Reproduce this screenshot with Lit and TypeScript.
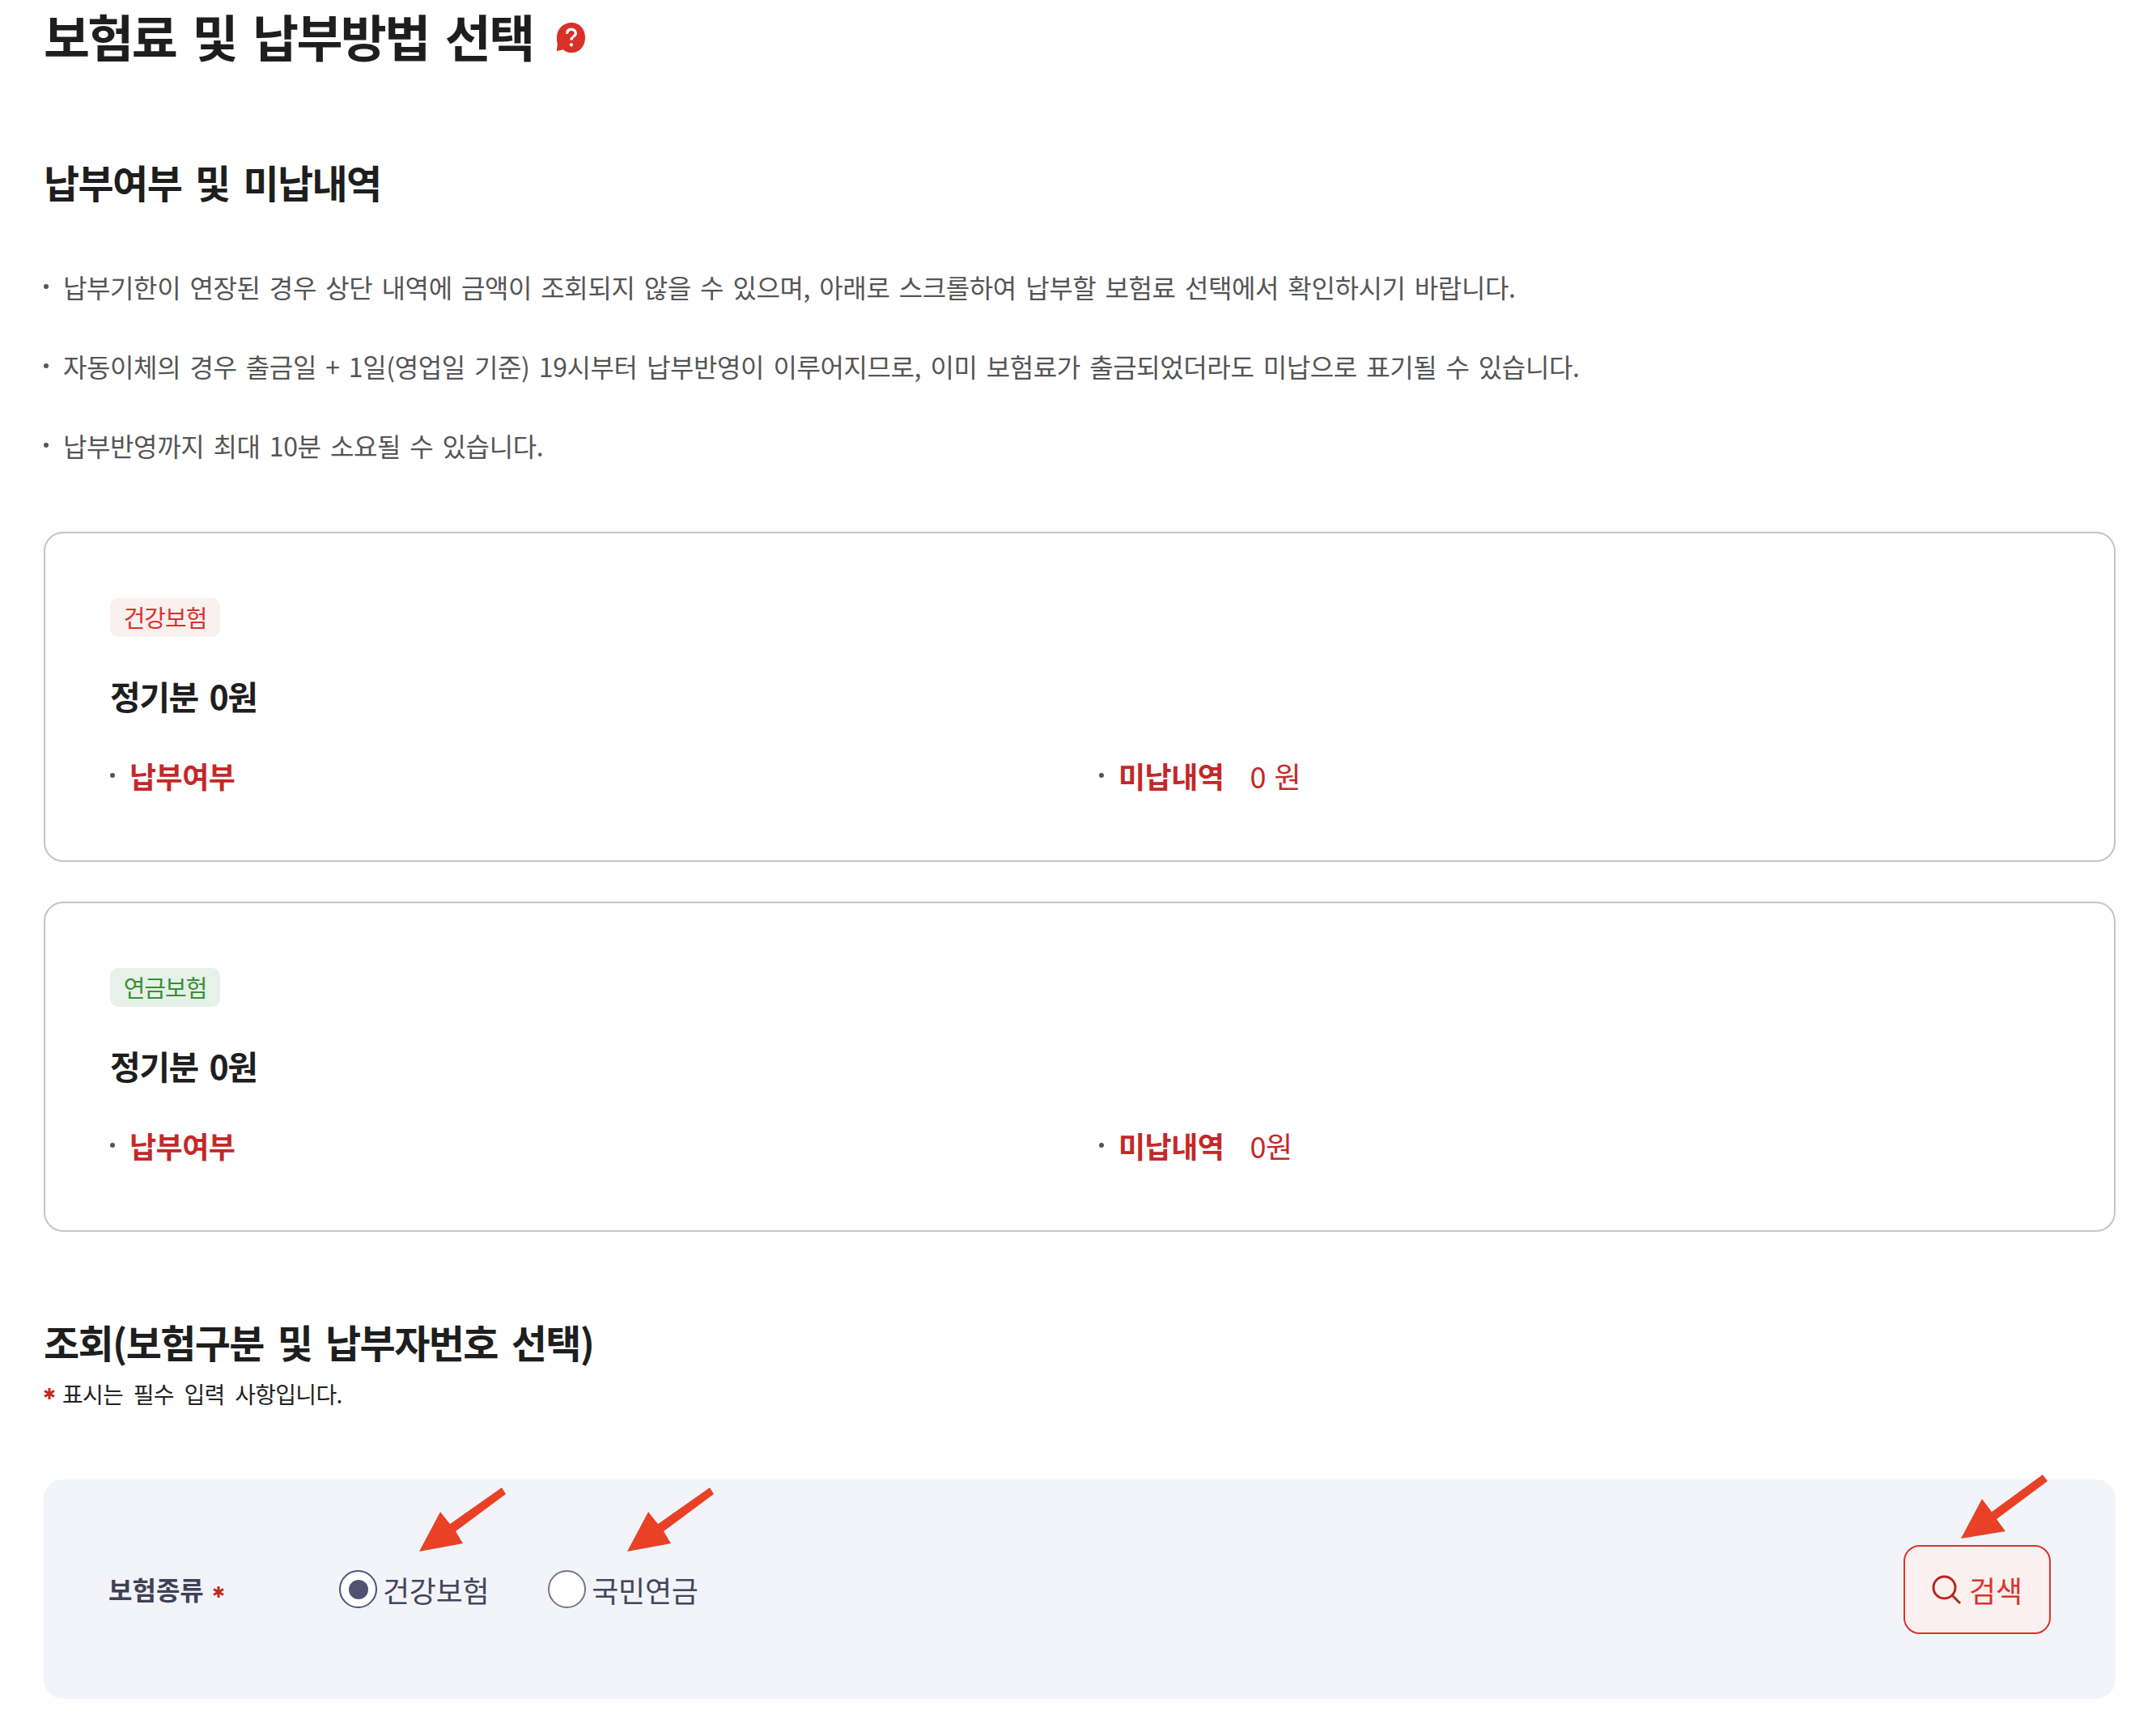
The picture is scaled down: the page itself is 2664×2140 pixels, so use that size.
import { LitElement, html, css, svg } from 'lit';
import { customElement } from 'lit/decorators.js';

const NOTES = [
  '납부기한이 연장된 경우 상단 내역에 금액이 조회되지 않을 수 있으며, 아래로 스크롤하여 납부할 보험료 선택에서 확인하시기 바랍니다.',
  '자동이체의 경우 출금일 + 1일(영업일 기준) 19시부터 납부반영이 이루어지므로, 이미 보험료가 출금되었더라도 미납으로 표기될 수 있습니다.',
  '납부반영까지 최대 10분 소요될 수 있습니다.',
];

const ARROWS = [
  '518,1917 544,1868 556,1883 620,1838 625,1846 563,1892 572,1907',
  '775,1917 801,1868 813,1883 877,1838 882,1846 820,1892 829,1907',
  '2423,1901 2449,1852 2461,1868 2524,1822 2530,1830 2467,1877 2478,1892',
];

const star = html`<svg class="star" viewBox="0 0 14 14" aria-label="필수">
  <path d="M7 0V14M1 3.500L13 10.500M13 3.500L1 10.500" />
</svg>`;

@customElement('app-root')
export class AppRoot extends LitElement {
  static styles = css`
    :host {
      display: block;
      position: relative;
      min-height: 2140px;
      padding: 4px 50px 0 54px;
      box-sizing: border-box;
      background: #fff;
      color: #1e1e1e;
      font-family: 'Noto Sans CJK KR', 'Noto Sans', sans-serif;
    }

    h1,
    h2,
    p,
    ul {
      margin: 0;
      padding: 0;
    }

    h1 {
      display: flex;
      align-items: center;
      gap: 27px;
      font-size: 62px;
      line-height: 80px;
      font-weight: 700;
      letter-spacing: -2.7px;
      word-spacing: 9px;
    }

    h1 svg {
      display: block;
      width: 39px;
      height: 39px;
      margin-top: 4px;
    }

    h2 {
      font-size: 48px;
      line-height: 70px;
      font-weight: 700;
      letter-spacing: -1.6px;
      word-spacing: 7.5px;
    }

    .sub-title {
      margin-top: 105px;
    }

    .notes {
      list-style: none;
      margin-top: 70px;
      display: flex;
      flex-direction: column;
      gap: 48px;
    }

    .notes li {
      display: flex;
      align-items: center;
      gap: 18px;
      font-size: 32px;
      line-height: 50px;
      letter-spacing: -0.4px;
      word-spacing: 4.5px;
      color: #555;
    }

    .dot {
      flex: none;
      width: 6px;
      height: 6px;
      border-radius: 50%;
      background: #555;
    }

    .card {
      margin-top: 49px;
      padding: 80px 32px 79px 80px;
      border: 2px solid #c4c4c4;
      border-radius: 24px;
    }

    .notes + .card {
      margin-top: 82px;
    }

    .badge {
      display: inline-block;
      vertical-align: top;
      height: 48px;
      width: 136px;
      border-radius: 10px;
      text-align: center;
      font-size: 29px;
      line-height: 46px;
      letter-spacing: -1px;
    }

    .badge.red {
      background: #fbf0f0;
      color: #d9342a;
    }

    .badge.green {
      background: #e6f1e8;
      color: #3a8f35;
    }

    .amount {
      margin-top: 42px;
      font-size: 41px;
      line-height: 60px;
      font-weight: 700;
      letter-spacing: -1.5px;
      word-spacing: 6px;
    }

    .rows {
      margin-top: 43px;
      display: grid;
      grid-template-columns: 1222px 1fr;
    }

    .row {
      display: flex;
      align-items: center;
      font-size: 36px;
      line-height: 52px;
      letter-spacing: -0.5px;
      word-spacing: 3px;
      color: #c42828;
    }

    .row .dot {
      margin-right: 18px;
    }

    .row b {
      font-weight: 700;
      margin-right: 32px;
    }

    .inquiry {
      margin-top: 100px;
    }

    .required-note {
      margin-top: 10px;
      display: flex;
      align-items: center;
      gap: 9px;
      font-size: 28px;
      line-height: 40px;
      letter-spacing: -0.7px;
      word-spacing: 7px;
      color: #222;
    }

    .star {
      flex: none;
      display: inline-block;
      width: 14px;
      height: 14px;
      fill: none;
      stroke: #c02a1e;
      stroke-width: 3;
    }

    .panel {
      margin-top: 86px;
      height: 271px;
      box-sizing: border-box;
      padding: 0 80px;
      display: flex;
      align-items: center;
      background: #f3f4fa;
      border-radius: 24px;
    }

    .field-label {
      width: 285px;
      flex: none;
      display: flex;
      align-items: center;
      gap: 11px;
      font-size: 32px;
      line-height: 44px;
      font-weight: 700;
      color: #3f4156;
      margin-top: -2px;
    }

    .field-label .star {
      margin-top: 8px;
    }

    .radios {
      display: flex;
      gap: 73px;
      flex: 1;
    }

    .radio {
      display: flex;
      align-items: center;
      gap: 7px;
      font-size: 36px;
      line-height: 48px;
      letter-spacing: -0.3px;
      color: #44465a;
    }

    .mark {
      flex: none;
      width: 47px;
      height: 47px;
      box-sizing: border-box;
      border: 2px solid #777;
      border-radius: 50%;
      background: #fff;
      display: flex;
      align-items: center;
      justify-content: center;
    }

    .radio.on .mark {
      border-color: #50536f;
    }

    .radio.on .mark::after {
      content: '';
      width: 24px;
      height: 24px;
      border-radius: 50%;
      background: #50536f;
    }

    .search {
      flex: none;
      width: 182px;
      height: 110px;
      box-sizing: border-box;
      border: 2px solid #d9342a;
      border-radius: 20px;
      background: #fbf0f0;
      color: #d9342a;
      font: inherit;
      font-size: 36px;
      display: flex;
      align-items: center;
      justify-content: center;
      gap: 10px;
    }

    .search svg {
      display: block;
      width: 36px;
      height: 36px;
      fill: none;
      stroke: #b5281f;
      stroke-width: 3;
    }

    .arrows {
      position: absolute;
      top: 0;
      left: 0;
      width: 2664px;
      height: 2140px;
      pointer-events: none;
    }
  `;

  private card(kind: string, tone: string, due: string) {
    return html`<section class="card">
      <span class="badge ${tone}">${kind}</span>
      <p class="amount">정기분 0원</p>
      <div class="rows">
        <div class="row"><span class="dot"></span><b>납부여부</b></div>
        <div class="row"><span class="dot"></span><b>미납내역</b>${due}</div>
      </div>
    </section>`;
  }

  render() {
    return html`
      <h1>
        보험료 및 납부방법 선택
        <svg viewBox="0 0 40 40">
          <path d="M21 1C31 1 38 9 38 20S31 39 21 39C17 39 13 38 10 35L3 37C2 37 2 36 2 35L3 28C2 25 2 23 2 20 2 9 10 1 21 1Z" fill="#d9302a" />
          <path d="M15 15C15 11 17.500 9.500 20.500 9.500S26 11.500 26 14.500C26 18.500 20.500 18.500 20.500 23" fill="none" stroke="#fff" stroke-width="3.400" />
          <circle cx="20.500" cy="29" r="2.200" fill="#fff" />
        </svg>
      </h1>

      <h2 class="sub-title">납부여부 및 미납내역</h2>
      <ul class="notes">
        ${NOTES.map((note) => html`<li><span class="dot"></span>${note}</li>`)}
      </ul>

      ${this.card('건강보험', 'red', '0 원')}
      ${this.card('연금보험', 'green', '0원')}

      <h2 class="inquiry">조회(보험구분 및 납부자번호 선택)</h2>
      <p class="required-note">${star}표시는 필수 입력 사항입니다.</p>

      <form class="panel">
        <div class="field-label">보험종류 ${star}</div>
        <div class="radios">
          <label class="radio on"><span class="mark"></span>건강보험</label>
          <label class="radio"><span class="mark"></span>국민연금</label>
        </div>
        <button class="search" type="button">
          <svg viewBox="0 0 36 36">
            <circle cx="15.500" cy="15.500" r="13.500" />
            <path d="M25 25L35 35" />
          </svg>
          검색
        </button>
      </form>

      <svg class="arrows" viewBox="0 0 2664 2140">
        ${ARROWS.map((points) => svg`<polygon points="${points}" fill="#e94125" />`)}
      </svg>
    `;
  }
}
